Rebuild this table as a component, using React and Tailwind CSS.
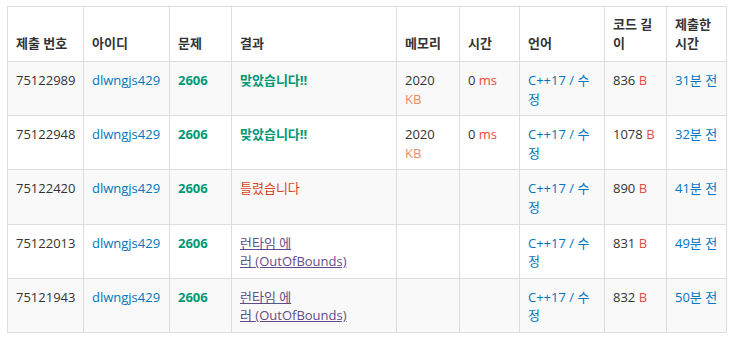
const rows = [
  { id: '75122989', result: 'ac', mem: '2020', time: '0', len: '836', ago: '31분 전' },
  { id: '75122948', result: 'ac', mem: '2020', time: '0', len: '1078', ago: '32분 전' },
  { id: '75122420', result: 'wa', len: '890', ago: '41분 전' },
  { id: '75122013', result: 'rte', len: '831', ago: '49분 전' },
  { id: '75121943', result: 'rte', len: '832', ago: '50분 전' },
];

const widths = ['w-[76px]', 'w-[86px]', 'w-[62px]', 'w-[165px]', 'w-[63px]', 'w-[60px]', 'w-[85px]', 'w-[62px]', 'w-[60px]'];
const headers = ['제출 번호', '아이디', '문제', '결과', '메모리', '시간', '언어', '코드 길이', '제출한 시간'];

function Result({ type }) {
  if (type === 'ac') return <span className="font-bold text-[#009874]">맞았습니다!!</span>;
  if (type === 'wa') return <span className="text-[#dd4124]">틀렸습니다</span>;
  return <span className="text-[#5f4d8b] underline">런타임 에러{'\u00a0'}(OutOfBounds)</span>;
}

export default function App() {
  const td = 'border border-[#ddd] px-2 pt-[9px] pb-[7px] align-top';
  return (
    <div className="pl-[7px] pt-[6px] text-[13px] leading-[1.42857] text-[#333]" style={{ fontFamily: '"Open Sans", "Noto Sans CJK KR", sans-serif' }}>
      <table className="table-fixed w-[720px] border-collapse">
        <colgroup>
          {widths.map((w, i) => <col key={i} className={w} />)}
        </colgroup>
        <thead>
          <tr>
            {headers.map((h) => (
              <th key={h} className="border border-[#ddd] px-2 pt-2 pb-[9px] align-bottom text-left font-bold h-[55px]">{h}</th>
            ))}
          </tr>
        </thead>
        <tbody>
          {rows.map((r, i) => (
            <tr key={r.id} className={i % 2 === 0 ? 'bg-[#f9f9f9] h-[54px]' : 'bg-white h-[54px]'}>
              <td className={td}>{r.id}</td>
              <td className={td}><span className="text-[#0076c0]">dlwngjs429</span></td>
              <td className={td}><span className="font-bold text-[#009874]">2606</span></td>
              <td className={td}><Result type={r.result} /></td>
              <td className={td}>
                {r.mem && <>{r.mem} <span className="text-[#ec8a6a]">KB</span></>}
              </td>
              <td className={td}>
                {r.time && <>{r.time} <span className="text-[#e74c3c]">ms</span></>}
              </td>
              <td className={td}><span className="text-[#0076c0]">C++17 / 수정</span></td>
              <td className={td}>{r.len} <span className="text-[#e74c3c]">B</span></td>
              <td className={td}><span className="text-[#0076c0]">{r.ago}</span></td>
            </tr>
          ))}
        </tbody>
      </table>
    </div>
  );
}
